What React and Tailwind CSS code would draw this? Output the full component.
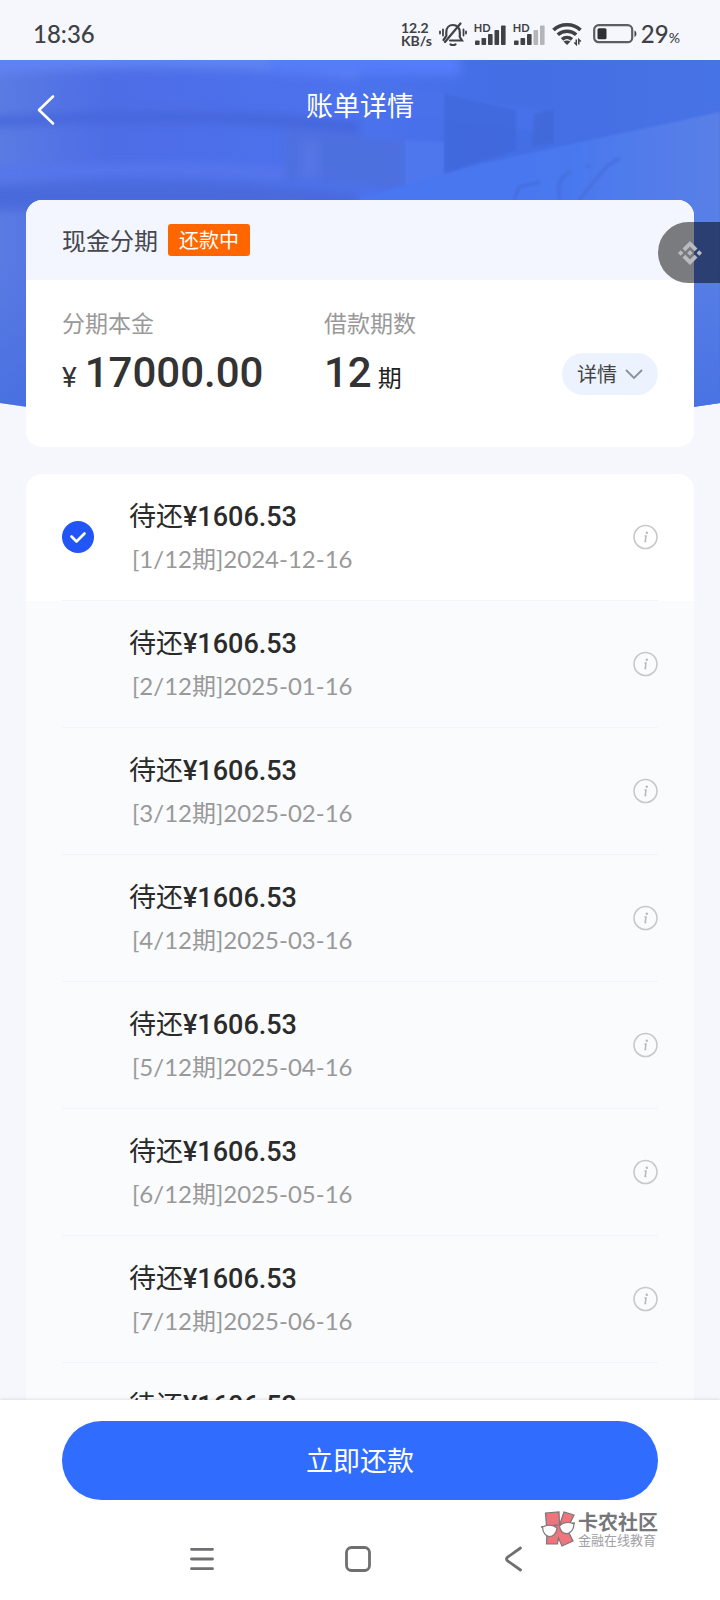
import React, { useState } from "react";

const installments = [
  { no: 1, date: "2024-12-16" },
  { no: 2, date: "2025-01-16" },
  { no: 3, date: "2025-02-16" },
  { no: 4, date: "2025-03-16" },
  { no: 5, date: "2025-04-16" },
  { no: 6, date: "2025-05-16" },
  { no: 7, date: "2025-06-16" },
  { no: 8, date: "2025-07-16" },
];

function BellOff() {
  return (
    <svg viewBox="0 0 28 24" className="h-6 w-7" fill="none" stroke="currentColor" strokeWidth="2.2" strokeLinecap="round">
      <path d="M11 18.500H23L20.800 15V10C20.800 6 18 3 14 3S7.300 6 7.300 10V14L4.500 18" />
      <path d="M21.500 1.500L6 20" />
      <path d="M11.500 22.300C13 23.300 15 23.300 16.500 22.300" />
      <path d="M4 7.500V13.500M1 9.500V11.500M24.500 7.500V13.500M27 9.500V11.500" strokeWidth="1.800" />
    </svg>
  );
}

function Signal({ level }) {
  const bars = [
    [1, 15.5, 4.5],
    [7.5, 13, 7],
    [14, 9, 11],
    [20.5, 5, 15],
    [27, 0.5, 19.5],
  ];
  return (
    <span className="relative flex h-[22px] w-8 items-end">
      <svg viewBox="0 0 32 20" className="h-5 w-8">
        {bars.map(([x, y, h], i) => (
          <rect key={x} x={x} y={y} width="4.6" height={h} rx="0.8" fill={i < level ? "#3f4145" : "#b4b5b9"} />
        ))}
      </svg>
      <span className="absolute left-0 top-0 font-['Lato'] text-[11px] font-bold leading-[10px]">HD</span>
    </span>
  );
}

function Wifi() {
  return (
    <svg viewBox="0 0 30 24" className="h-6 w-[30px]" fill="none" stroke="currentColor" strokeWidth="3.6">
      <path d="M1.500 8C8.500 1 21.500 1 28.500 8" />
      <path d="M5.800 12.800C11 8 19 8 24.200 12.800" />
      <path d="M10 17.300C13 14.800 17 14.800 20 17.300" />
      <path d="M15 23L11.500 19.500C13.500 18 16.500 18 18.500 19.500Z" fill="currentColor" stroke="none" />
      <path d="M24.300 17.500V22.500L22.300 20.500M26.800 22.500V17.500L28.800 19.500" strokeWidth="1.500" />
    </svg>
  );
}

function Battery() {
  return (
    <svg viewBox="0 0 44 20" className="h-5 w-11">
      <rect x="1.200" y="1.200" width="38" height="17" rx="4.500" fill="none" stroke="#5c5e62" strokeWidth="2.200" />
      <rect x="4.500" y="4.300" width="9" height="11" rx="1.500" fill="#2f3033" />
      <path d="M41.500 6.500C44 7 44 12.500 41.500 13Z" fill="#3f4145" />
    </svg>
  );
}

function StatusBar() {
  return (
    <div className="flex h-[60px] shrink-0 items-center justify-between bg-[#f5f7fc] pl-[33px] pr-10 pt-2 font-['Lato','Noto_Sans_CJK_SC',sans-serif] text-[#3f4145]">
      <span className="text-2xl font-medium">18:36</span>
      <div className="flex items-center gap-[7px]">
        <span className="text-sm font-bold leading-[13px]">
          12.2
          <br />
          KB/s
        </span>
        <BellOff />
        <Signal level={5} />
        <Signal level={3} />
        <Wifi />
        <span className="flex items-center gap-1 pl-1">
          <Battery />
          <span className="text-2xl font-medium leading-7">
            29<span className="text-sm">%</span>
          </span>
        </span>
      </div>
    </div>
  );
}

function HeaderArt() {
  return (
    <svg
      viewBox="0 0 720 371"
      preserveAspectRatio="none"
      className="absolute inset-x-0 top-0 h-[371px] w-full"
      aria-hidden="true"
    >
      <defs>
        <linearGradient id="sky" x1="0" y1="0" x2="1" y2="0">
          <stop offset="0" stopColor="#5a7be2" />
          <stop offset="0.150" stopColor="#4d6de6" />
          <stop offset="0.500" stopColor="#4c72ee" />
          <stop offset="0.700" stopColor="#436ee4" />
          <stop offset="1" stopColor="#4673e6" />
        </linearGradient>
        <linearGradient id="roof" x1="0" y1="0" x2="1" y2="0">
          <stop offset="0" stopColor="#4b76f2" />
          <stop offset="0.550" stopColor="#4878ef" />
          <stop offset="1" stopColor="#5a80e6" />
        </linearGradient>
        <linearGradient id="shade" x1="0" y1="0" x2="0" y2="1">
          <stop offset="0.300" stopColor="#3f6be0" stopOpacity="0" />
          <stop offset="1" stopColor="#3f6be0" stopOpacity="0.700" />
        </linearGradient>
        <filter id="soft" x="-10%" y="-30%" width="120%" height="160%">
          <feGaussianBlur stdDeviation="5" />
        </filter>
        <filter id="edge">
          <feGaussianBlur stdDeviation="1.200" />
        </filter>
        <clipPath id="bowl">
          <path d="M0 0H720V343Q360 400 0 343Z" />
        </clipPath>
      </defs>
      <g clipPath="url(#bowl)">
        <rect width="720" height="371" fill="url(#sky)" />
        <g filter="url(#soft)">
          <path d="M-20 -20H260L360 4V18C240 8 120 4 -20 16Z" fill="#5f82f2" />
          <path d="M270 -20H460V16L270 10Z" fill="#547cfa" />
          <path d="M-20 58C120 50 260 50 360 62V74C250 60 120 58 -20 68Z" fill="#4566da" />
          <path d="M-20 108C120 100 240 104 285 108V120C180 114 90 114 -20 122Z" fill="#5476ec" />
          <path d="M-20 126C120 118 240 120 360 134V150H-20Z" fill="#4a6bdc" />
          <path d="M285 68L405 82V130L285 118Z" fill="#4e6fdf" />
          <path d="M300 80H320V118H300Z" fill="#5475e4" />
        </g>
        <g filter="url(#edge)">
          <path d="M360 18L444 34L540 50V72L444 60L360 52Z" fill="#4a72ea" opacity="0.700" />
          <path d="M444 34L516 50V90L444 114Z" fill="#3f67da" opacity="0.700" />
          <path d="M534 54L554 50V84L532 86Z" fill="#3f66d2" opacity="0.600" />
          <path d="M405 80L444 82V116L405 126Z" fill="#527bf0" opacity="0.600" />
          <path d="M360 138L480 104L720 52V371H360Z" fill="url(#roof)" />
          <path d="M514 140L519 127L540 122M560 140C556 124 562 114 572 112M579 140L607 106L620 98M586 106L590 107" fill="none" stroke="#426ad6" strokeWidth="4" opacity="0.500" />
        </g>
        <rect y="130" width="720" height="241" fill="url(#shade)" />
      </g>
    </svg>
  );
}

function InfoIcon() {
  return (
    <svg viewBox="0 0 26 26" className="h-[26px] w-[26px]" fill="none" stroke="#c8c8ca">
      <circle cx="13.500" cy="13" r="11.500" strokeWidth="1.600" />
      <circle cx="14.800" cy="8.800" r="1.200" fill="#b8b8ba" stroke="none" />
      <path d="M12.500 12H14L13.200 17.500H14.300" stroke="#b8b8ba" strokeWidth="1.500" />
    </svg>
  );
}

function SummaryCard() {
  return (
    <section className="overflow-hidden rounded-2xl bg-white">
      <div className="flex h-20 items-center gap-2.5 bg-[#f3f6fe] px-9">
        <h2 className="text-2xl leading-8 text-[#45474d]">现金分期</h2>
        <span className="rounded-[3px] bg-[#ff6600] px-[11px] text-xl leading-8 text-white">还款中</span>
      </div>
      <div className="flex h-[167px] items-start px-9 pt-6">
        <dl className="w-[262px]">
          <dt className="text-[23px] leading-9 text-[#999]">分期本金</dt>
          <dd className="flex items-baseline gap-2 font-['Roboto','Noto_Sans_CJK_SC',sans-serif] leading-[66px] text-[#333]">
            <span className="text-[28px]">¥</span>
            <span className="text-[42px] font-medium">17000.00</span>
          </dd>
        </dl>
        <dl className="flex-1">
          <dt className="text-[23px] leading-9 text-[#999]">借款期数</dt>
          <dd className="flex items-baseline gap-1.5 leading-[66px]">
            <span className="font-['Roboto'] text-[42px] font-medium text-[#333]">12</span>
            <span className="text-2xl text-[#222]">期</span>
          </dd>
        </dl>
        <button type="button" className="mt-[49px] flex h-[42px] items-center gap-2 rounded-full bg-[#edf3fe] px-[15px] text-xl text-[#444]">
          详情
          <svg viewBox="0 0 18 12" className="h-3 w-[18px]" fill="none" stroke="#8a8f99" strokeWidth="1.800">
            <path d="M1 2L9 10L17 2" />
          </svg>
        </button>
      </div>
    </section>
  );
}

function InstallmentRow({ item, checked, onToggle }) {
  const first = item.no === 1;
  const id = `term-${item.no}`;
  return (
    <li className={first ? "bg-white px-9" : "bg-[#fafbfd] px-9"}>
      <div className="flex h-[127px] items-center border-b border-[#f3f4f7]">
        <span className="grid w-[67px] shrink-0 items-center">
          {first && (
            <>
              <input
                id={id}
                type="checkbox"
                checked={checked}
                onChange={onToggle}
                className="col-start-1 row-start-1 h-8 w-8 appearance-none rounded-full border border-[#c4c4c6] checked:border-0 checked:bg-[#2255f5]"
              />
              <svg viewBox="0 0 32 32" className="pointer-events-none col-start-1 row-start-1 h-8 w-8" fill="none" stroke="#fff" strokeWidth="2.600" strokeLinecap="round" strokeLinejoin="round">
                <path d="M9.500 15.500L14.500 20.500L22.500 12.500" />
              </svg>
            </>
          )}
        </span>
        <label htmlFor={first ? id : undefined} className="flex-1 pt-0.5">
          <span className="block font-['Roboto','Noto_Sans_CJK_SC',sans-serif] text-[27px] leading-[42px] text-[#2b2b2b]">
            待还<span className="font-medium">¥1606.53</span>
          </span>
          <span className="block pl-[3px] font-['Lato','Noto_Sans_CJK_SC',sans-serif] text-2xl leading-[42px] text-[#999]">
            [{item.no}/12期]{item.date}
          </span>
        </label>
        <button type="button" aria-label="说明">
          <InfoIcon />
        </button>
      </div>
    </li>
  );
}

function BrandMark() {
  return (
    <div className="absolute right-[62px] top-[110px] flex items-center gap-0.5">
      <svg viewBox="0 0 36 38" className="h-[38px] w-9" stroke="#77777b" strokeWidth="1.200">
        <path d="M5.500 3L19 2L19.500 15L24 2L34 5L27 19L33 31L22 36L18.500 28L17.500 34L6.500 34L7 22Z" fill="#f0747c" />
        <path d="M1 17L18 15M19 14.500L35 13" strokeWidth="1.600" />
        <path d="M2.500 17C3 30 16 29 17 18C13 14.500 7 14.500 2.500 17Z" fill="#fff" />
        <path d="M19.500 16C20.500 27 33.500 26 34 14C29 12 23 12 19.500 16Z" fill="#fff" />
      </svg>
      <div className="flex flex-col">
        <span className="text-xl font-bold leading-[22px] text-[#77777b]">卡农社区</span>
        <span className="text-[13px] leading-[14px] text-[#a0a0a4]">金融在线教育</span>
      </div>
    </div>
  );
}

function Footer() {
  return (
    <footer className="relative shrink-0 bg-white shadow-[0_0_4px_rgba(0,0,0,0.16)]">
      <div className="px-[62px] pt-[21px]">
        <button type="button" className="h-[79px] w-full rounded-full bg-[#306dff] text-[27px] text-white">
          立即还款
        </button>
      </div>
      <BrandMark />
      <nav className="flex h-[100px] items-center justify-center gap-[130px] pr-1 pt-[18px] text-[#6f6f72]">
        <button type="button" aria-label="菜单">
          <svg viewBox="0 0 26 26" className="h-[26px] w-[26px]" fill="none" stroke="currentColor" strokeWidth="2.800" strokeLinecap="round">
            <path d="M2.500 3.300H23.500M2.500 13H23.500M2.500 22.700H23.500" />
          </svg>
        </button>
        <button type="button" aria-label="主页">
          <svg viewBox="0 0 26 26" className="h-[26px] w-[26px]" fill="none" stroke="currentColor" strokeWidth="2.800">
            <rect x="1.500" y="1.500" width="23" height="23" rx="5" />
          </svg>
        </button>
        <button type="button" aria-label="返回上一级">
          <svg viewBox="0 0 26 26" className="h-[26px] w-[26px]" fill="none" stroke="currentColor" strokeWidth="2.800" strokeLinecap="round" strokeLinejoin="round">
            <path d="M19.500 2L6.500 11.200Q4.500 13 6.500 14.800L19.500 24" />
          </svg>
        </button>
      </nav>
    </footer>
  );
}

export default function App() {
  const [checked, setChecked] = useState(true);
  return (
    <div lang="zh-CN" className="flex h-screen flex-col bg-[#f5f7fc] font-['Noto_Sans_CJK_SC',sans-serif]">
      <StatusBar />
      <main className="relative min-h-0 flex-1 overflow-y-auto [scrollbar-width:none]">
        <HeaderArt />
        <header className="relative grid h-[140px] grid-cols-[1fr_auto_1fr] items-start px-9 pt-[25px] text-white">
          <button type="button" aria-label="返回" className="flex h-[50px] w-5 items-center">
            <svg viewBox="0 0 20 32" className="h-8 w-5" fill="none" stroke="currentColor" strokeWidth="2.600" strokeLinecap="round" strokeLinejoin="round">
              <path d="M17 2.500L3 16L17 29.500" />
            </svg>
          </button>
          <h1 className="text-[27px] leading-10">账单详情</h1>
        </header>
        <div className="relative flex flex-col gap-[27px] px-[26px]">
          <SummaryCard />
          <ul className="overflow-hidden rounded-t-2xl">
            {installments.map((item) => (
              <InstallmentRow key={item.no} item={item} checked={checked} onToggle={() => setChecked(!checked)} />
            ))}
          </ul>
        </div>
      </main>
      <button type="button" aria-label="悬浮窗" className="absolute right-0 top-[222px] flex h-[61px] w-[62px] items-center rounded-l-full bg-black/50 pl-5">
        <svg viewBox="0 0 24 24" className="h-6 w-6" fill="#b9bbc2">
          <path d="M12 0L19.500 7.500L16.700 10.300L12 5.600L7.300 10.300L4.500 7.500Z" />
          <path d="M12 24L4.500 16.500L7.300 13.700L12 18.400L16.700 13.700L19.500 16.500Z" />
          <path d="M12 9.200L14.800 12L12 14.800L9.200 12ZM2.700 9.300L5.400 12L2.700 14.700L0 12ZM21.300 9.300L24 12L21.300 14.700L18.600 12Z" />
        </svg>
      </button>
      <Footer />
    </div>
  );
}
